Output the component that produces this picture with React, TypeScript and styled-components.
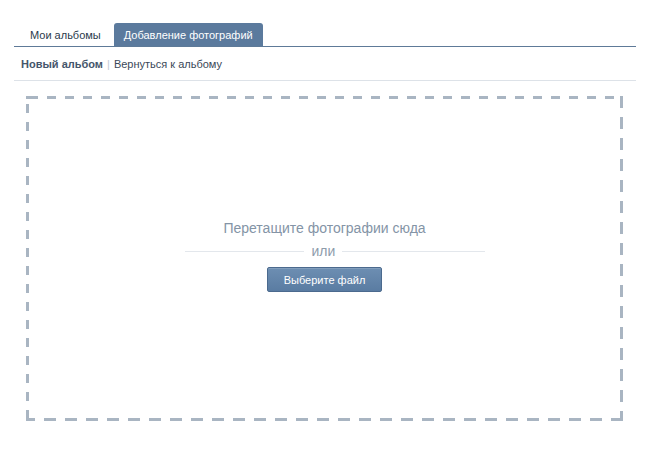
import styled, { createGlobalStyle } from 'styled-components';

const GlobalStyle = createGlobalStyle`
  html, body {
    margin: 0;
    padding: 0;
    background: #fff;
  }
  body {
    font-family: "Liberation Sans", Arial, sans-serif;
    font-size: 11px;
  }
`;

const dash = '#a9b5c2';

const Page = styled.div`
  width: 622px;
  padding: 23px 14px 0;
`;

const Tabs = styled.div`
  display: flex;
  align-items: flex-end;
  gap: 3px;
  padding-left: 6px;
  border-bottom: 1px solid #5e7a98;
`;

const Tab = styled.div<{ active?: boolean }>`
  height: 23px;
  line-height: 24px;
  padding: 0 10px;
  border-radius: 3px 3px 0 0;
  font-size: 11px;
  color: ${p => (p.active ? '#fff' : '#2b3a4c')};
  background: ${p => (p.active ? '#5b7a9d' : 'transparent')};
  cursor: pointer;
`;

const SubNav = styled.div`
  display: flex;
  align-items: center;
  height: 33px;
  padding: 0 7px;
  border-bottom: 1px solid #dde2e8;
  font-size: 11px;
`;

const SubActive = styled.span`
  font-weight: bold;
  color: #45566b;
`;

const Separator = styled.span`
  color: #c3cbd4;
  margin: 0 4px;
`;

const SubLink = styled.a`
  color: #3a4858;
  text-decoration: none;
`;

/* dashed frame: 9px dash / 9px gap, 3px thick */
const DropZone = styled.div`
  box-sizing: border-box;
  margin: 15px 13px 0 12px;
  height: 325px;
  padding-bottom: 5px;
  background:
    linear-gradient(${dash}, ${dash}) left top / 3px 3px no-repeat,
    repeating-linear-gradient(90deg, ${dash} 0 9px, transparent 9px 18px) 3px 0 / calc(100% - 3px) 3px no-repeat,
    repeating-linear-gradient(270deg, ${dash} 0 12px, transparent 12px 21px) 0 100% / 100% 3px no-repeat,
    repeating-linear-gradient(180deg, transparent 0 5px, ${dash} 5px 14px, transparent 14px 18px) 0 3px / 3px calc(100% - 3px) no-repeat,
    repeating-linear-gradient(180deg, ${dash} 0 12px, transparent 12px 21px) 100% 0 / 3px 100% no-repeat;
  display: flex;
  flex-direction: column;
  align-items: center;
  justify-content: center;
`;

const DropTitle = styled.div`
  font-size: 14px;
  color: #8494a6;
`;

const OrRow = styled.div`
  display: flex;
  align-items: center;
  width: 300px;
  margin: 7px 0 0 20px;
  font-size: 14px;
  color: #8e9cab;

  &::before,
  &::after {
    content: '';
    height: 1px;
    background: #e3e7ec;
  }
  &::before {
    width: 119px;
  }
  &::after {
    flex: 1;
  }
`;

const OrText = styled.span`
  padding: 0 7px 0 8px;
`;

const Button = styled.button`
  margin-top: 8px;
  width: 115px;
  height: 25px;
  border: 1px solid #4b6a8e;
  border-radius: 2px;
  background: linear-gradient(#6d8eb2, #5a7ca2);
  color: #fff;
  font-family: "Liberation Sans", Arial, sans-serif;
  font-size: 11px;
  cursor: pointer;
  box-shadow: inset 0 1px 0 rgba(255, 255, 255, 0.15);
`;

export default function App() {
  return (
    <>
      <GlobalStyle />
      <Page>
        <Tabs>
          <Tab>Мои альбомы</Tab>
          <Tab active>Добавление фотографий</Tab>
        </Tabs>
        <SubNav>
          <SubActive>Новый альбом</SubActive>
          <Separator>|</Separator>
          <SubLink href="#">Вернуться к альбому</SubLink>
        </SubNav>
        <DropZone>
          <DropTitle>Перетащите фотографии сюда</DropTitle>
          <OrRow>
            <OrText>или</OrText>
          </OrRow>
          <Button>Выберите файл</Button>
        </DropZone>
      </Page>
    </>
  );
}
